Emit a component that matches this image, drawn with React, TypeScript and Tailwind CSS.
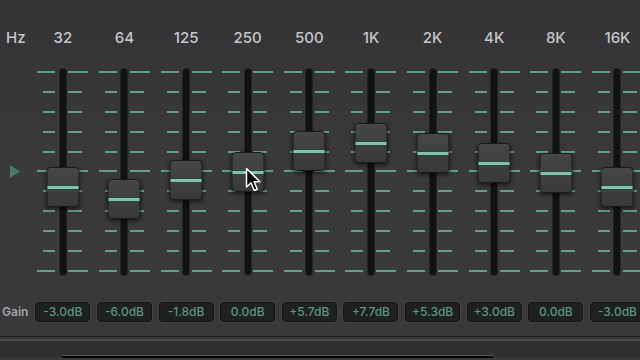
import React from "react";

const bands = [
  { hz: "32", gain: "-3.0dB", y: 186 },
  { hz: "64", gain: "-6.0dB", y: 198 },
  { hz: "125", gain: "-1.8dB", y: 179 },
  { hz: "250", gain: "0.0dB", y: 171 },
  { hz: "500", gain: "+5.7dB", y: 150 },
  { hz: "1K", gain: "+7.7dB", y: 142 },
  { hz: "2K", gain: "+5.3dB", y: 152 },
  { hz: "4K", gain: "+3.0dB", y: 162 },
  { hz: "8K", gain: "0.0dB", y: 172 },
  { hz: "16K", gain: "-3.0dB", y: 186 },
];

const SLIDER_TOP = 69;
const ticks = Array.from({ length: 11 }, (_, i) => i);

function Tick({ long }: { long: boolean }) {
  return (
    <div className="flex justify-center gap-[13px] h-[2px]">
      <div className="w-[18px] flex justify-end">
        <div className={`${long ? "w-[18px]" : "w-[12px]"} h-[2px] bg-[#60a08a]`} />
      </div>
      <div className="w-[20px] flex justify-start">
        <div className={`${long ? "w-[20px]" : "w-[14px]"} h-[2px] bg-[#60a08a]`} />
      </div>
    </div>
  );
}

function Slider({ y }: { y: number }) {
  const top = y - 19.5 - SLIDER_TOP;
  return (
    <div className="relative grid h-[206px]">
      <div className="[grid-area:1/1] mt-[2px] h-[201px] flex flex-col justify-between">
        {ticks.map((i) => (
          <Tick key={i} long={i === 0 || i === 5 || i === 10} />
        ))}
      </div>
      <div className="[grid-area:1/1] flex justify-center">
        <div className="w-[6px] h-[206px] rounded-full bg-[#111212] shadow-[0_0_0_1px_rgba(0,0,0,0.35)]" />
      </div>
      <div
        className="absolute left-1/2 -translate-x-1/2 w-[33px] h-[40px] rounded-[4px] border border-[#1b1b1c] bg-gradient-to-b from-[#454647] to-[#39393a] shadow-[0_2px_4px_rgba(0,0,0,0.55)] flex flex-col"
        style={{ top }}
      >
        <div className="h-[17px]" />
        <div className="h-[1px] bg-[#1d4a3a]" />
        <div className="h-[3px] bg-[#86c2aa]" />
        <div className="h-[1px] bg-[#22463a]" />
      </div>
    </div>
  );
}

export default function App() {
  return (
    <div className="relative w-[640px] h-[360px] overflow-hidden bg-gradient-to-b from-[#343436] via-[#3a3a3c] to-[#39393b] font-[Inter,'Liberation_Sans',sans-serif]">
      <div className="grid grid-cols-[32px_repeat(10,61.63px)] h-[69px] pt-[29px]">
        <div className="pl-[6px] text-[15px] leading-[18px] font-medium text-[#c6c6c8]">Hz</div>
        {bands.map((b) => (
          <div key={b.hz} className="text-center text-[15px] leading-[18px] font-medium text-[#c6c6c8]">
            {b.hz}
          </div>
        ))}
      </div>

      <div className="grid grid-cols-[32px_repeat(10,61.63px)] h-[206px]">
        <div className="pt-[95px] pl-[9px]">
          <svg width="12" height="15" viewBox="0 0 12 15">
            <polygon points="1,1 11,7.5 1,14" fill="#3f8c6f" opacity="0.85" />
          </svg>
        </div>
        {bands.map((b) => (
          <Slider key={b.hz} y={b.y} />
        ))}
      </div>

      <div className="grid grid-cols-[32px_repeat(10,61.63px)] mt-[27px] h-[20px] items-center">
        <div className="pl-[2px] text-[12px] font-semibold text-[#a3a3a5]">Gain</div>
        {bands.map((b) => (
          <div key={b.hz} className="flex justify-center">
            <div className="w-[55px] h-[20px] rounded-[4px] bg-[#1f2020] border border-[#141414] shadow-[0_0_0_1px_rgba(255,255,255,0.05)] flex items-center justify-center text-[12px] font-medium text-[#5a9680]">
              {b.gain}
            </div>
          </div>
        ))}
      </div>

      <div className="mt-[14px] h-[1px] bg-[#1c1c1d]" />
      <div className="mt-[2px] h-[2px] bg-[#4b4b4d]" />
      <div className="h-[17px] bg-[#303032] flex items-end pl-[62px]">
        <div className="w-[431px] h-[3px] bg-[#050505] border-t border-[#555]" />
      </div>

      <svg
        className="absolute left-[245px] top-[167px]"
        width="18"
        height="27"
        viewBox="0 0 18 27"
      >
        <path
          d="M1.5 1.5 L1.5 20 L6 15.8 L9.3 23.5 L12.3 22.2 L9.1 14.8 L15 14.8 Z"
          fill="#000"
          stroke="#fff"
          strokeWidth="1.5"
          strokeLinejoin="round"
        />
      </svg>
    </div>
  );
}
